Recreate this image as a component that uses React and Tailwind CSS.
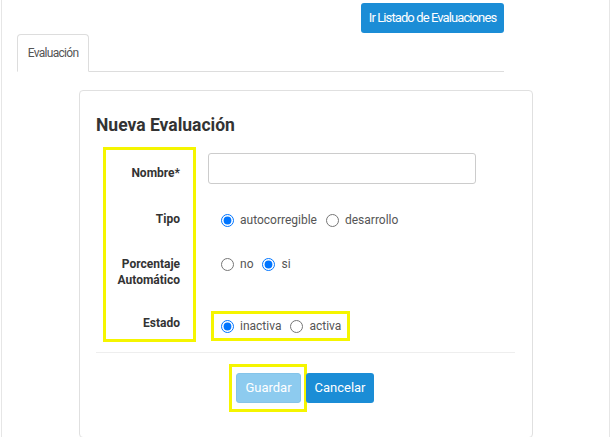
import React from 'react';

const Radio = ({ label, checked }) => (
  <label className="flex items-center">
    <input type="radio" readOnly checked={checked} className="m-0 w-[13px] h-[13px]" />
    <span className="ml-[6px] text-[12px] leading-4 text-[#555]">{label}</span>
  </label>
);

const App = () => {
  return (
    <div className="ml-px w-[609px] h-[437px] border-x border-[#e6e6e6] bg-white font-['Roboto',sans-serif] overflow-hidden">
      {/* top bar + tabs */}
      <div className="pl-[15px] pr-[105px]">
        <div className="flex justify-end pt-[3px]">
          <button className="h-[30px] w-[143px] rounded-[3px] bg-[#1b8dd6] text-white text-[13px] tracking-[-0.9px] whitespace-nowrap">
            Ir Listado de Evaluaciones
          </button>
        </div>
        <div className="mt-px flex border-b border-[#ddd]">
          <div className="-mb-px h-[38px] w-[72px] flex items-center justify-center border border-b-white border-[#ddd] rounded-t-[4px] bg-white text-[12px] tracking-[-0.7px] text-[#555]">
            Evaluación
          </div>
        </div>
      </div>

      {/* card */}
      <div className="ml-[77px] mt-[18px] w-[454px] h-[348px] border border-[#e0e0e0] rounded-[4px] bg-white">
        <h2 className="pt-[24px] pl-[16px] text-[17.5px] leading-5 font-bold text-[#333]">Nueva Evaluación</h2>

        <div className="mt-[12px] ml-[23px] flex items-start">
          <div className="w-[93px] h-[195px] border-[3px] border-[#f5f500] pr-[13px] pt-[15px] flex flex-col items-end text-right text-[12px] leading-4 font-bold text-[#333]">
            <span>Nombre*</span>
            <span className="mt-[30px]">Tipo</span>
            <span className="mt-[29px]">Porcentaje<br />Automático</span>
            <span className="mt-[27px]">Estado</span>
          </div>

          <div className="ml-[12px] flex flex-col">
            <input type="text" className="mt-[6px] w-[268px] h-[31px] border border-[#ccc] rounded-[3px] outline-none" />
            <div className="mt-[28px] ml-[13px] flex items-center gap-[9px]">
              <Radio label="autocorregible" checked />
              <Radio label="desarrollo" />
            </div>
            <div className="mt-[28px] ml-[13px] flex items-center gap-[9px]">
              <Radio label="no" />
              <Radio label="si" checked />
            </div>
            <div className="mt-[39px] ml-[3px] self-start h-[30px] border-[3px] border-[#f5f500] pl-[7px] pr-[6px] flex items-center gap-[9px]">
              <Radio label="inactiva" checked />
              <Radio label="activa" />
            </div>
          </div>
        </div>

        <div className="mt-[10px] ml-[16px] mr-[17px] border-t border-[#eee]" />

        <div className="mt-[11px] ml-[149px] flex items-start">
          <div className="border-[3px] border-[#f5f500] pl-[4px] pr-[3px] py-[6px]">
            <button className="h-[30px] w-[65px] rounded-[3px] bg-[#8dcbef] border border-[#84c4ea] text-white text-[13px]">
              Guardar
            </button>
          </div>
          <button className="mt-[9px] -ml-px h-[30px] w-[68px] rounded-[3px] bg-[#1b8dd6] text-white text-[13px]">
            Cancelar
          </button>
        </div>
      </div>
    </div>
  );
};

export default App;
